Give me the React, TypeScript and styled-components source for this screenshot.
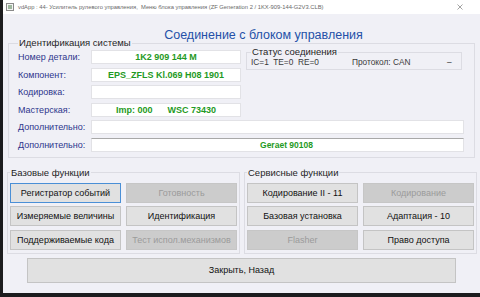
import styled, { createGlobalStyle } from 'styled-components';

const GlobalStyle = createGlobalStyle`
  html, body {
    margin: 0;
    padding: 0;
    background: #1c1c1e;
  }
  body {
    font-family: "Liberation Sans", Arial, sans-serif;
  }
`;

const identRows = [
  { label: 'Номер детали:', value: '1K2 909 144 M' },
  { label: 'Компонент:', value: 'EPS_ZFLS Kl.069 H08 1901' },
  { label: 'Кодировка:', value: '' },
  { label: 'Мастерская:', value: 'Imp: 000      WSC 73430' },
];

const baseButtons = [
  { text: 'Регистратор событий', focused: true },
  { text: 'Готовность', disabled: true },
  { text: 'Измеряемые величины' },
  { text: 'Идентификация' },
  { text: 'Поддерживаемые кода' },
  { text: 'Тест испол.механизмов', disabled: true },
];

const serviceButtons = [
  { text: 'Кодирование II - 11' },
  { text: 'Кодирование', disabled: true },
  { text: 'Базовая установка' },
  { text: 'Адаптация - 10' },
  { text: 'Flasher', disabled: true },
  { text: 'Право доступа' },
];

type BtnData = { text: string; disabled?: boolean; focused?: boolean };

function ButtonGrid({ items }: { items: BtnData[] }) {
  return (
    <FuncGrid>
      {items.map((b) => (
        <FuncButton key={b.text} disabled={b.disabled} $focused={b.focused}>
          {b.text}
        </FuncButton>
      ))}
    </FuncGrid>
  );
}

export default function App() {
  return (
    <>
      <GlobalStyle />
      <Window>
        <TitleBar>
          <svg width="8" height="8" viewBox="0 0 8 8">
            <rect x="0.5" y="0.5" width="7" height="7" fill="#f4f4f4" stroke="#8a8a8a" />
            <rect x="2" y="2" width="4" height="4" fill="#9fb89f" />
          </svg>
          <TitleText>
            vdApp : 44- Усилитель рулевого управления,&nbsp; Меню блока управления (ZF Generation 2 / 1KX-909-144-G2V3.CLB)
          </TitleText>
          <CloseIcon width="6" height="6" viewBox="0 0 6 6">
            <path d="M0.5 0.5L5.5 5.5M5.5 0.5L0.5 5.5" stroke="#8c8c8c" strokeWidth="0.8" />
          </CloseIcon>
        </TitleBar>
        <Content>
          <Heading>Соединение с блоком управления</Heading>
          <IdentGroup>
            <GroupLegend>Идентификация системы</GroupLegend>
            <TopSection>
              <IdentColumn>
                {identRows.map((r) => (
                  <IdentRow key={r.label}>
                    <Label>{r.label}</Label>
                    <ValueBox>{r.value}</ValueBox>
                  </IdentRow>
                ))}
              </IdentColumn>
              <StatusGroup>
                <StatusLegend>Статус соединения</StatusLegend>
                <StatusLine>
                  <StatusCell $w={101}>IC=1&nbsp; TE=0&nbsp; RE=0</StatusCell>
                  <StatusCell $w={95}>Протокол: CAN</StatusCell>
                  <StatusCell $w={10}>–</StatusCell>
                </StatusLine>
              </StatusGroup>
            </TopSection>
            <IdentRow>
              <Label>Дополнительно:</Label>
              <ValueBox $wide />
            </IdentRow>
            <IdentRow>
              <Label>Дополнительно:</Label>
              <ValueBox $wide $sunken>Geraet 90108</ValueBox>
            </IdentRow>
          </IdentGroup>
          <FuncSection>
            <FuncGroup>
              <GroupLegend>Базовые функции</GroupLegend>
              <ButtonGrid items={baseButtons} />
            </FuncGroup>
            <FuncGroup>
              <GroupLegend>Сервисные функции</GroupLegend>
              <ButtonGrid items={serviceButtons} />
            </FuncGroup>
          </FuncSection>
          <CloseButton>Закрыть, Назад</CloseButton>
        </Content>
      </Window>
    </>
  );
}

const Window = styled.div`
  margin-left: 3px;
  width: 477px;
  height: 293px;
  background: #f0f0f6;
  display: flex;
  flex-direction: column;
  overflow: hidden;
`;

const TitleBar = styled.div`
  height: 14px;
  flex: none;
  background: #ffffff;
  display: flex;
  align-items: center;
  padding: 0 0 0 3px;
  gap: 4px;
`;

const TitleText = styled.span`
  font-size: 5.8px;
  color: #6a6a6a;
  white-space: nowrap;
  flex: 1;
`;

const CloseIcon = styled.svg`
  margin-right: 17px;
  flex: none;
`;

const Content = styled.div`
  padding: 0 4px 0 4px;
  display: flex;
  flex-direction: column;
`;

const Heading = styled.div`
  height: 24px;
  box-sizing: border-box;
  padding: 14px 0 0 44px;
  font-size: 12.5px;
  line-height: 14px;
  color: #2450a8;
  text-align: center;
  white-space: nowrap;
`;

const GroupLegend = styled.legend`
  font-size: 9.5px;
  line-height: 10px;
  color: #1f1f1f;
  padding: 0 1px;
  margin-left: 0;
`;

const IdentGroup = styled.fieldset`
  margin: 0 1px;
  padding: 2px 8px 5px 9px;
  border: 1px solid #dcdce3;
  display: flex;
  flex-direction: column;
  gap: 3.5px;
`;

const TopSection = styled.div`
  display: flex;
  align-items: flex-start;
`;

const IdentColumn = styled.div`
  width: 223px;
  flex: none;
  display: flex;
  flex-direction: column;
  gap: 3.5px;
`;

const IdentRow = styled.div`
  display: flex;
  align-items: center;
  height: 14px;
`;

const Label = styled.span`
  width: 73px;
  flex: none;
  font-size: 9px;
  color: #2e358c;
  white-space: nowrap;
`;

const ValueBox = styled.div<{ $wide?: boolean; $sunken?: boolean }>`
  box-sizing: border-box;
  height: 14px;
  width: ${({ $wide }) => ($wide ? '373px' : '150px')};
  padding-left: ${({ $sunken }) => ($sunken ? '18px' : '0')};
  background: #ffffff;
  border: 1px solid #e2e2e6;
  border-top-color: ${({ $sunken }) => ($sunken ? '#a8a8a8' : '#e2e2e6')};
  color: #1f9a24;
  font-weight: bold;
  font-size: ${({ $sunken }) => ($sunken ? '8.5px' : '9px')};
  line-height: 12px;
  text-align: center;
  white-space: pre;
`;

const StatusGroup = styled.fieldset`
  margin: -3px 0 0 5px;
  width: 216px;
  box-sizing: border-box;
  padding: 1px 4px 2px 4px;
  border: 1px solid #dcdce3;
`;

const StatusLegend = styled.legend`
  font-size: 9.5px;
  line-height: 10px;
  color: #1f1f1f;
  padding: 0 1px;
`;

const StatusLine = styled.div`
  display: flex;
  font-size: 8.3px;
  color: #3a3a3a;
  line-height: 9px;
`;

const StatusCell = styled.span<{ $w: number }>`
  width: ${({ $w }) => $w}px;
  flex: none;
  white-space: nowrap;
`;

const FuncSection = styled.div`
  display: flex;
  gap: 4px;
  margin-top: 10px;
  margin-right: -1px;
`;

const FuncGroup = styled.fieldset`
  flex: 1;
  margin: 0;
  padding: 5px 2px 3px 2px;
  border: 1px solid #dcdce3;
  min-width: 0;
`;

const FuncGrid = styled.div`
  display: grid;
  grid-template-columns: 1fr 1fr;
  grid-auto-rows: 20px;
  column-gap: 5px;
  row-gap: 3.5px;
`;

const FuncButton = styled.button<{ $focused?: boolean }>`
  font-family: "Liberation Sans", Arial, sans-serif;
  font-size: 9px;
  color: #111111;
  background: #e1e1e1;
  border: 1px solid ${({ $focused }) => ($focused ? '#4a8fd6' : '#c4c4c4')};
  border-radius: 0;
  padding: 0;
  margin: 0;
  white-space: nowrap;
  &:disabled {
    background: #cccccc;
    border-color: #c6c6c6;
    color: #9b9b9b;
  }
`;

const CloseButton = styled.button`
  align-self: center;
  width: 429px;
  height: 25px;
  margin-top: 4px;
  font-family: "Liberation Sans", Arial, sans-serif;
  font-size: 9px;
  color: #111111;
  background: #e1e1e1;
  border: 1px solid #c4c4c4;
  border-radius: 0;
  padding: 0;
`;
